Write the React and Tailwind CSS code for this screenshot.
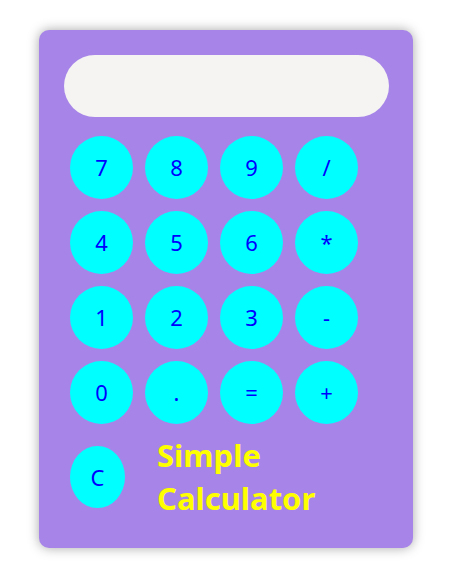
export default function App() {
  const rows = [
    ['7', '8', '9', '/'],
    ['4', '5', '6', '*'],
    ['1', '2', '3', '-'],
    ['0', '.', '=', '+'],
  ]

  return (
    <div className="min-h-[568px] w-[453px] bg-white pt-[30px] pl-[39px] font-['Noto_Sans',sans-serif]">
      <div className="w-[374px] h-[518px] rounded-[10px] bg-[#a785e8] shadow-[0_0_12px_rgba(0,0,0,0.35)] pt-[25px] pl-[25px]">
        {/* 显示屏 */}
        <div className="w-[325px] h-[62px] rounded-full bg-[#f5f4f2]" />

        {/* 按键 */}
        <div className="mt-[19px] ml-[6px] flex flex-col gap-[12px]">
          {rows.map((row, i) => (
            <div key={i} className="flex gap-[12px]">
              {row.map((k) => (
                <button
                  key={k}
                  className="w-[63px] h-[63px] rounded-full bg-[#00ffff] text-[#0000ff] text-[22px] flex items-center justify-center"
                >
                  {k}
                </button>
              ))}
            </div>
          ))}
        </div>

        <div className="mt-[10px] ml-[6px] flex items-center gap-[32px]">
          <button className="w-[55px] h-[62px] rounded-[50%] bg-[#00ffff] text-[#0000ff] text-[22px] flex items-center justify-center">
            C
          </button>
          <h1 className="text-[31px] font-bold leading-[43px] text-[#ffff00]">
            Simple
            <br />
            Calculator
          </h1>
        </div>
      </div>
    </div>
  )
}
